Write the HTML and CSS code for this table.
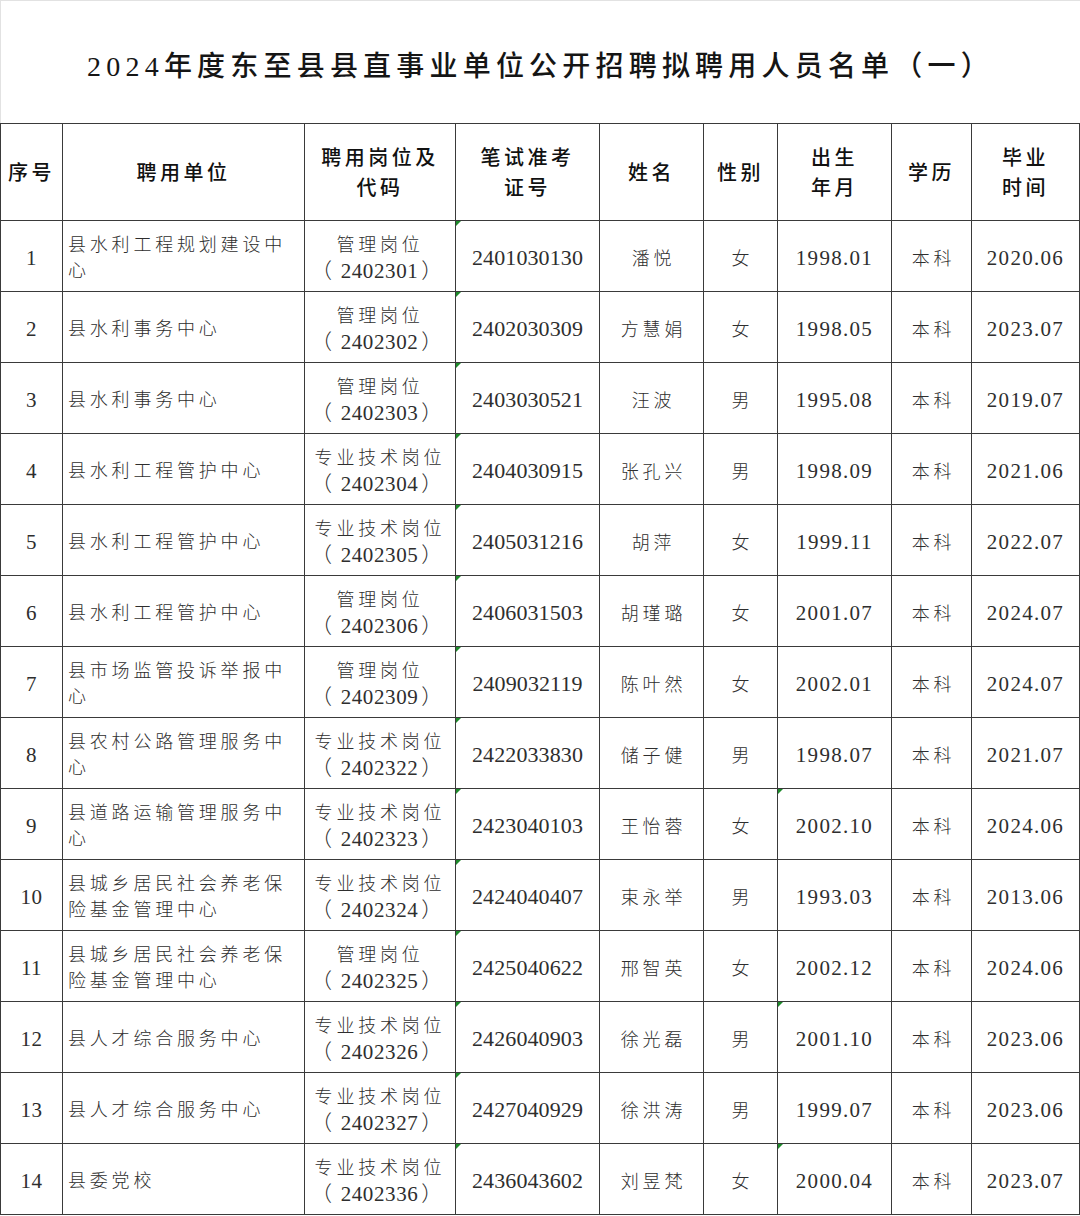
FILE: index.html
```html
<!DOCTYPE html>
<html lang="zh-CN">
<head>
<meta charset="utf-8">
<title>2024年度东至县县直事业单位公开招聘拟聘用人员名单（一）</title>
<link rel="stylesheet" href="styles.css">
</head>
<body>
<div class="page">
  <div class="title-box">
    <h1 class="title">2024年度东至县县直事业单位公开招聘拟聘用人员名单（一）</h1>
  </div>
  <table class="list">
    <colgroup>
      <col class="c1"><col class="c2"><col class="c3"><col class="c4"><col class="c5"><col class="c6"><col class="c7"><col class="c8"><col class="c9">
    </colgroup>
    <thead>
      <tr>
        <th>序号</th>
        <th>聘用单位</th>
        <th>聘用岗位及<br>代码</th>
        <th class="soft">笔试准考<br>证号</th>
        <th>姓名</th>
        <th>性别</th>
        <th class="soft">出生<br>年月</th>
        <th>学历</th>
        <th>毕业<br>时间</th>
      </tr>
    </thead>
    <tbody>
      <tr><td class="num">1</td><td class="unit">县水利工程规划建设中心</td><td class="pos">管理岗位<br><span class="code"><span class="pl">（</span>2402301<span class="pr">）</span></span></td><td class="id soft mark">2401030130</td><td class="cn">潘悦</td><td class="cn">女</td><td class="date soft">1998.01</td><td class="cn">本科</td><td class="date">2020.06</td></tr>
      <tr><td class="num">2</td><td class="unit">县水利事务中心</td><td class="pos">管理岗位<br><span class="code"><span class="pl">（</span>2402302<span class="pr">）</span></span></td><td class="id soft mark">2402030309</td><td class="cn">方慧娟</td><td class="cn">女</td><td class="date soft">1998.05</td><td class="cn">本科</td><td class="date">2023.07</td></tr>
      <tr><td class="num">3</td><td class="unit">县水利事务中心</td><td class="pos">管理岗位<br><span class="code"><span class="pl">（</span>2402303<span class="pr">）</span></span></td><td class="id soft mark">2403030521</td><td class="cn">汪波</td><td class="cn">男</td><td class="date soft">1995.08</td><td class="cn">本科</td><td class="date">2019.07</td></tr>
      <tr><td class="num">4</td><td class="unit">县水利工程管护中心</td><td class="pos">专业技术岗位<br><span class="code"><span class="pl">（</span>2402304<span class="pr">）</span></span></td><td class="id soft mark">2404030915</td><td class="cn">张孔兴</td><td class="cn">男</td><td class="date soft">1998.09</td><td class="cn">本科</td><td class="date">2021.06</td></tr>
      <tr><td class="num">5</td><td class="unit">县水利工程管护中心</td><td class="pos">专业技术岗位<br><span class="code"><span class="pl">（</span>2402305<span class="pr">）</span></span></td><td class="id soft mark">2405031216</td><td class="cn">胡萍</td><td class="cn">女</td><td class="date soft">1999.11</td><td class="cn">本科</td><td class="date">2022.07</td></tr>
      <tr><td class="num">6</td><td class="unit">县水利工程管护中心</td><td class="pos">管理岗位<br><span class="code"><span class="pl">（</span>2402306<span class="pr">）</span></span></td><td class="id soft mark">2406031503</td><td class="cn">胡瑾璐</td><td class="cn">女</td><td class="date soft">2001.07</td><td class="cn">本科</td><td class="date">2024.07</td></tr>
      <tr><td class="num">7</td><td class="unit">县市场监管投诉举报中心</td><td class="pos">管理岗位<br><span class="code"><span class="pl">（</span>2402309<span class="pr">）</span></span></td><td class="id soft mark">2409032119</td><td class="cn">陈叶然</td><td class="cn">女</td><td class="date soft">2002.01</td><td class="cn">本科</td><td class="date">2024.07</td></tr>
      <tr><td class="num">8</td><td class="unit">县农村公路管理服务中心</td><td class="pos">专业技术岗位<br><span class="code"><span class="pl">（</span>2402322<span class="pr">）</span></span></td><td class="id soft mark">2422033830</td><td class="cn">储子健</td><td class="cn">男</td><td class="date soft">1998.07</td><td class="cn">本科</td><td class="date">2021.07</td></tr>
      <tr><td class="num">9</td><td class="unit">县道路运输管理服务中心</td><td class="pos">专业技术岗位<br><span class="code"><span class="pl">（</span>2402323<span class="pr">）</span></span></td><td class="id soft mark">2423040103</td><td class="cn">王怡蓉</td><td class="cn">女</td><td class="date soft mark">2002.10</td><td class="cn">本科</td><td class="date">2024.06</td></tr>
      <tr><td class="num">10</td><td class="unit">县城乡居民社会养老保险基金管理中心</td><td class="pos">专业技术岗位<br><span class="code"><span class="pl">（</span>2402324<span class="pr">）</span></span></td><td class="id soft mark">2424040407</td><td class="cn">束永举</td><td class="cn">男</td><td class="date soft">1993.03</td><td class="cn">本科</td><td class="date">2013.06</td></tr>
      <tr><td class="num">11</td><td class="unit">县城乡居民社会养老保险基金管理中心</td><td class="pos">管理岗位<br><span class="code"><span class="pl">（</span>2402325<span class="pr">）</span></span></td><td class="id soft mark">2425040622</td><td class="cn">邢智英</td><td class="cn">女</td><td class="date soft">2002.12</td><td class="cn">本科</td><td class="date">2024.06</td></tr>
      <tr><td class="num">12</td><td class="unit">县人才综合服务中心</td><td class="pos">专业技术岗位<br><span class="code"><span class="pl">（</span>2402326<span class="pr">）</span></span></td><td class="id soft mark">2426040903</td><td class="cn">徐光磊</td><td class="cn">男</td><td class="date soft mark">2001.10</td><td class="cn">本科</td><td class="date">2023.06</td></tr>
      <tr><td class="num">13</td><td class="unit">县人才综合服务中心</td><td class="pos">专业技术岗位<br><span class="code"><span class="pl">（</span>2402327<span class="pr">）</span></span></td><td class="id soft mark">2427040929</td><td class="cn">徐洪涛</td><td class="cn">男</td><td class="date soft">1999.07</td><td class="cn">本科</td><td class="date">2023.06</td></tr>
      <tr><td class="num">14</td><td class="unit">县委党校</td><td class="pos">专业技术岗位<br><span class="code"><span class="pl">（</span>2402336<span class="pr">）</span></span></td><td class="id soft mark">2436043602</td><td class="cn">刘昱梵</td><td class="cn">女</td><td class="date soft mark">2000.04</td><td class="cn">本科</td><td class="date">2023.07</td></tr>
    </tbody>
  </table>
</div>
</body>
</html>
```
FILE: styles.css
```css
html, body {
  margin: 0;
  padding: 0;
  background: #ffffff;
}

body {
  font-family: "Liberation Serif", "Noto Sans CJK SC", serif;
  color: #2a2a2a;
}

.page {
  width: 1080px;
  height: 1216px;
  overflow: hidden;
}

.title-box {
  height: 123px;
  box-sizing: border-box;
  border-top: 1px solid #e2e2e2;
  border-left: 1px solid #e2e2e2;
  display: flex;
  align-items: center;
  justify-content: center;
  padding-top: 4px;
}

.title {
  margin: 0;
  font-family: "Liberation Serif", "Noto Sans CJK SC", serif;
  font-size: 28px;
  font-weight: 500;
  letter-spacing: 5.2px;
  color: #151515;
  white-space: nowrap;
}

.list {
  width: 1079px;
  border-collapse: collapse;
  table-layout: fixed;
}

.c1 { width: 62px; }
.c2 { width: 242px; }
.c3 { width: 151px; }
.c4 { width: 144px; }
.c5 { width: 104px; }
.c6 { width: 74px; }
.c7 { width: 114px; }
.c8 { width: 80px; }
.c9 { width: 108px; }

.list th,
.list td {
  border: 1px solid #3a3a3a;
  padding: 0;
  vertical-align: middle;
  text-align: center;
  position: relative;
}

.list th {
  height: 96px;
  font-family: "Noto Sans CJK SC", sans-serif;
  font-size: 20px;
  font-weight: 500;
  letter-spacing: 3.5px;
  line-height: 30px;
  color: #111111;
}

.list td {
  height: 70px;
  font-size: 18px;
  line-height: 26px;
  color: #2e2e2e;
}

.list th.soft,
.list td.soft {
  border-left-color: #8c8c8c;
}

.list td.num {
  font-family: "Liberation Serif", serif;
  font-size: 21px;
  letter-spacing: 0.5px;
  height: 67px;
  padding-top: 3px;
}

.list td.unit {
  text-align: left;
  padding: 0 4px 0 5px;
  font-family: "Noto Sans CJK SC", sans-serif;
  font-size: 18px;
  letter-spacing: 3.8px;
  font-weight: 300;
}

.list td.pos {
  font-family: "Noto Sans CJK SC", sans-serif;
  letter-spacing: 3.8px;
  font-weight: 300;
  height: 68px;
  padding-top: 2px;
}

.code {
  font-family: "Liberation Serif", "Noto Sans CJK SC", serif;
  font-size: 21px;
  letter-spacing: 0.6px;
  font-weight: 400;
}

.pl {
  font-family: "Noto Sans CJK SC", sans-serif;
  font-weight: 300;
  margin-right: 8px;
  margin-left: -2px;
}

.pr {
  font-family: "Noto Sans CJK SC", sans-serif;
  font-weight: 300;
  margin-left: 3px;
  margin-right: 4px;
}

.list td.id {
  font-family: "Liberation Serif", serif;
  font-size: 22px;
  letter-spacing: 0.1px;
  height: 67px;
  padding-top: 3px;
}

.list td.date {
  font-family: "Liberation Serif", serif;
  font-size: 21px;
  letter-spacing: 1.3px;
  height: 67px;
  padding-top: 3px;
}

.list td.cn {
  font-family: "Noto Sans CJK SC", sans-serif;
  font-size: 18px;
  letter-spacing: 3.8px;
  font-weight: 300;
  padding-left: 4px;
  height: 69px;
  padding-top: 1px;
}

.mark::before {
  content: "";
  position: absolute;
  top: 0;
  left: 0;
  width: 0;
  height: 0;
  border-top: 5px solid #1d8a2a;
  border-right: 5px solid transparent;
}
```
